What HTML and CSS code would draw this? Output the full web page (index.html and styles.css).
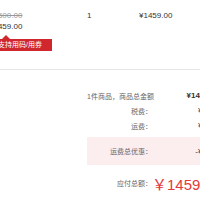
FILE: index.html
```html
<!DOCTYPE html>
<html lang="zh">
<head>
<meta charset="utf-8">
<link rel="stylesheet" href="styles.css">
</head>
<body>
<div class="page">
  <section class="items">
    <div class="item">
      <div class="col-price">
        <div class="old">¥1500.00</div>
        <div class="now">¥1459.00</div>
        <div class="tag">支持用码/用券</div>
      </div>
      <div class="col-qty">1</div>
      <div class="col-sub">¥1459.00</div>
    </div>
  </section>
  <section class="summary">
    <div class="row"><span class="label">1件商品，商品总金额</span><span class="value bold">¥1459.00</span></div>
    <div class="row"><span class="label">税费：</span><span class="value">¥0.00</span></div>
    <div class="row"><span class="label">运费：</span><span class="value">¥0.00</span></div>
    <div class="row pink"><span class="label">运费总优惠：</span><span class="value">-¥0.00</span></div>
    <div class="row total"><span class="label">应付总额：</span><span class="value red">￥1459.00</span></div>
  </section>
</div>
</body>
</html>
```
FILE: styles.css
```css
html, body {
  margin: 0;
  padding: 0;
  background: #fff;
}
.page {
  width: 200px;
  height: 200px;
  overflow: hidden;
  font-family: "Liberation Sans", "Noto Sans CJK SC", sans-serif;
  color: #333;
}
.items {
  height: 70px;
  border-bottom: 1px solid #e6e6e6;
  box-sizing: border-box;
}
.item {
  display: flex;
  padding-top: 10px;
  font-size: 8px;
  line-height: 11px;
}
.col-price {
  margin-left: -11px;
  width: 98px;
  flex: none;
}
.old {
  color: #999;
  text-decoration: line-through;
}
.now {
  color: #333;
}
.tag {
  position: relative;
  width: fit-content;
  margin-top: 7px;
  height: 12px;
  line-height: 12px;
  padding: 0 10px 0 9px;
  background: #d0262e;
  color: #fff;
  font-size: 7px;
  white-space: nowrap;
}
.tag::before {
  content: "";
  position: absolute;
  left: 13px;
  top: -4px;
  border-left: 4px solid transparent;
  border-right: 4px solid transparent;
  border-bottom: 4px solid #d0262e;
}
.col-qty {
  width: 52px;
  flex: none;
}
.col-sub {
  flex: none;
  white-space: nowrap;
}
.summary {
  margin-left: 87px;
  width: 140px;
  padding-top: 18px;
  font-size: 7px;
}
.row {
  display: flex;
  align-items: center;
  height: 15px;
  padding-right: 9px;
}
.label {
  flex: 1;
  text-align: right;
  color: #666;
  white-space: nowrap;
}
.value {
  width: 66px;
  flex: none;
  text-align: right;
  color: #333;
  font-size: 8px;
  white-space: nowrap;
}
.bold {
  font-weight: bold;
}
.pink {
  margin-top: 4px;
  height: 28px;
  background: #fcedef;
}
.total {
  margin-top: 6px;
  height: 24px;
}
.red {
  color: #e4393c;
  font-size: 15px;
}
```
